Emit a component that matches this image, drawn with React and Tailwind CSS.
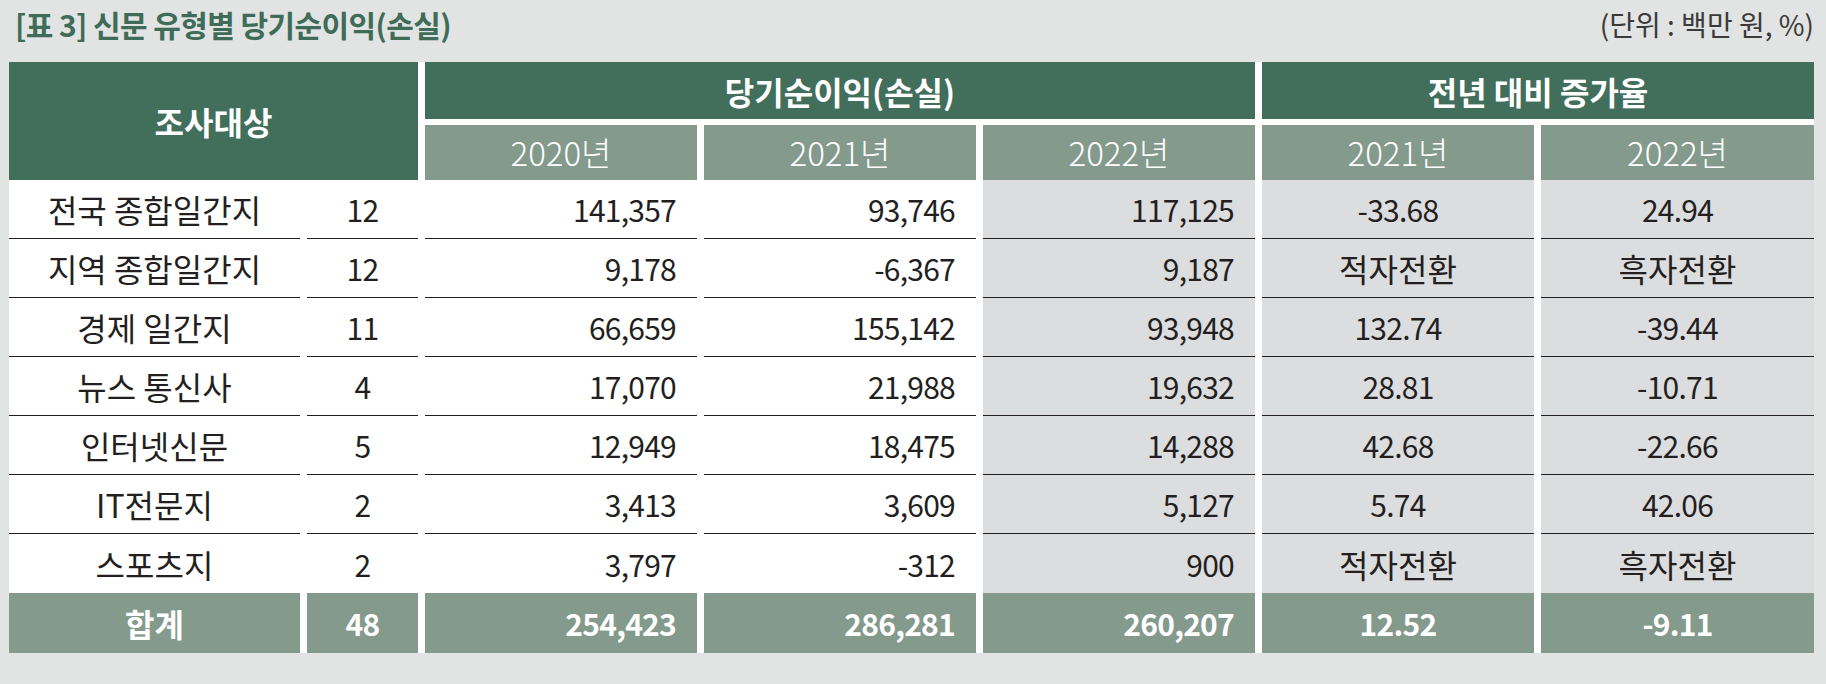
import React from 'react';

const FONT = { fontFamily: '"Noto Sans CJK KR", "Noto Sans", sans-serif' };

const COLS = 'grid grid-cols-[291px_111px_272px_272px_272px_272px_273px] gap-x-[7px]';

const rows = [
    ['전국 종합일간지', '12', '141,357', '93,746', '117,125', '-33.68', '24.94'],
    ['지역 종합일간지', '12', '9,178', '-6,367', '9,187', '적자전환', '흑자전환'],
    ['경제 일간지', '11', '66,659', '155,142', '93,948', '132.74', '-39.44'],
    ['뉴스 통신사', '4', '17,070', '21,988', '19,632', '28.81', '-10.71'],
    ['인터넷신문', '5', '12,949', '18,475', '14,288', '42.68', '-22.66'],
    ['IT전문지', '2', '3,413', '3,609', '5,127', '5.74', '42.06'],
    ['스포츠지', '2', '3,797', '-312', '900', '적자전환', '흑자전환'],
];

const total = ['합계', '48', '254,423', '286,281', '260,207', '12.52', '-9.11'];

// columns 2020 / 2021 / 2022 are right aligned, the rest centred
const align = i => (i >= 2 && i <= 4 ? 'justify-end pr-[21px]' : 'justify-center');

// korean labels sit a bit larger than the figures
const size = v => (/[가-힣]/.test(v) ? 'text-[32px] tracking-normal' : 'text-[30px] tracking-[-0.025em]');

const App = () => {
    return (
        <div className="w-[1826px] h-[684px] bg-[#e2e4e3] pl-[9px] pr-[12px]" style={FONT}>
            <div className="h-[62px] flex justify-between items-start pt-[8px] pl-[6px]">
                <h1 className="text-[30px] leading-[32px] font-bold text-[#3f6c58] tracking-[-0.02em]">
                    [표 3] 신문 유형별 당기순이익(손실)
                </h1>
                <p className="text-[28px] leading-[32px] text-[#3a3a3a]">
                    (단위 : 백만 원, %)
                </p>
            </div>

            <div className="bg-white w-[1805px]">
                <div className={`${COLS} grid-rows-[57px_55px] gap-y-[6px] text-white`}>
                    <div className="col-span-2 row-span-2 bg-[#426e5c] flex items-center justify-center text-[32px] font-bold leading-none">
                        조사대상
                    </div>
                    <div className="col-span-3 bg-[#426e5c] flex items-center justify-center text-[32px] font-bold leading-none">
                        당기순이익(손실)
                    </div>
                    <div className="col-span-2 bg-[#426e5c] flex items-center justify-center text-[32px] font-bold leading-none">
                        전년 대비 증가율
                    </div>
                    {['2020년', '2021년', '2022년', '2021년', '2022년'].map((y, i) => (
                        <div
                            key={i}
                            className="bg-[#839a8c] flex items-center justify-center text-[33px] font-light leading-none"
                        >
                            {y}
                        </div>
                    ))}
                </div>

                <div className={`${COLS} leading-none text-[#231f20]`}>
                    {rows.map((r, ri) =>
                        r.map((v, i) => (
                            <div
                                key={`${ri}-${i}`}
                                className={`h-[59px] flex items-center ${align(i)} ${size(v)} ${
                                    i >= 4 ? 'bg-[#dcdddf]' : ''
                                } ${ri < rows.length - 1 ? 'border-b border-[#231f20]' : ''}`}
                            >
                                {v}
                            </div>
                        ))
                    )}
                    {total.map((v, i) => (
                        <div
                            key={`t-${i}`}
                            className={`h-[60px] bg-[#839a8c] text-white font-bold flex items-center ${align(i)} ${size(v)}`}
                        >
                            {v}
                        </div>
                    ))}
                </div>
            </div>
        </div>
    );
};

export default App;
